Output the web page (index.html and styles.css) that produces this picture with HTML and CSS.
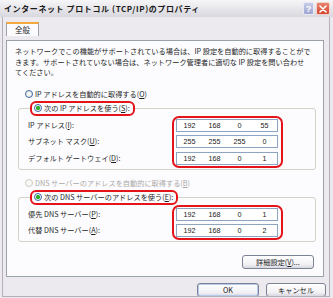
FILE: index.html
```html
<!DOCTYPE html>
<html lang="ja">
    <head>
        <meta charset="utf-8">
        <link rel="stylesheet" href="styles.css">
    </head>
    <body>
        <div class="win">
            <div class="titlebar">
                <span class="title">インターネット プロトコル (TCP/IP)のプロパティ</span>
                <span class="tbtn help">?</span>
                <span class="tbtn close">
                    <svg width="8" height="8" viewBox="0 0 8 8"><path d="M1 1 L7 7 M7 1 L1 7" stroke="#fff" stroke-width="1.6" stroke-linecap="round"/></svg>
                </span>
            </div>
            <div class="tabs">
                <div class="tab">全般</div>
            </div>
            <div class="panel">
                <p class="intro">ネットワークでこの機能がサポートされている場合は、IP 設定を自動的に取得することがで<br>きます。サポートされていない場合は、ネットワーク管理者に適切な IP 設定を問い合わせ<br>てください。</p>
                <div class="radio first"><span class="dot"></span>IP アドレスを自動的に取得する(<u>O</u>)</div>
                <fieldset class="group">
                    <legend><span class="radio on mark">
                        <span class="dot"></span>次の IP アドレスを使う(<u>S</u>):</span></legend>
                    <div class="labels">
                        <div>IP アドレス(<u>I</u>):</div>
                        <div>サブネット マスク(<u>U</u>):</div>
                        <div>デフォルト ゲートウェイ(<u>D</u>):</div>
                    </div>
                    <div class="fields">
                        <div class="ip"><span>192</span><span>168</span><span>0</span><span>55</span></div>
                        <div class="ip"><span>255</span><span>255</span><span>255</span><span>0</span></div>
                        <div class="ip"><span>192</span><span>168</span><span>0</span><span>1</span></div>
                    </div>
                </fieldset>
                <div class="radio off"><span class="dot"></span>DNS サーバーのアドレスを自動的に取得する(<u>B</u>)</div>
                <fieldset class="group">
                    <legend><span class="radio on mark">
                        <span class="dot"></span>次の DNS サーバーのアドレスを使う(<u>E</u>):</span></legend>
                    <div class="labels">
                        <div>優先 DNS サーバー(<u>P</u>):</div>
                        <div>代替 DNS サーバー(<u>A</u>):</div>
                    </div>
                    <div class="fields">
                        <div class="ip"><span>192</span><span>168</span><span>0</span><span>1</span></div>
                        <div class="ip"><span>192</span><span>168</span><span>0</span><span>2</span></div>
                    </div>
                </fieldset>
                <div class="adv">
                    <button class="btn wide">詳細設定(<u>V</u>)...</button>
                </div>
            </div>
            <div class="footer">
                <button class="btn ok">OK</button>
                <button class="btn cancel">キャンセル</button>
            </div>
        </div>
    </body>
</html>
```

FILE: styles.css
```css
*{
    box-sizing: border-box;
    margin: 0;
    padding: 0;
}
body{
    background: #ece9ef;
    font-family: "Noto Sans CJK JP", "Noto Sans", sans-serif;
    color: #1e1e1e;
}
.win{
    position: relative;
    width: 333px;
    height: 298px;
    overflow: hidden;
    background: #ece9ef;
}
/* thin outer frame of the dialog */
.win::after{
    content: "";
    position: absolute;
    left: 2px;
    right: 3px;
    top: 17px;
    bottom: 1px;
    border: 1px solid #b3b0b9;
    border-top: none;
    pointer-events: none;
}
.titlebar{
    height: 17px;
    display: flex;
    align-items: center;
    padding-left: 4px;
    padding-right: 3px;
    background: linear-gradient(#f6f6f8, #e4e3e8 60%, #d9d8df);
}
.title{
    font-size: 8px;
    font-weight: bold;
    letter-spacing: 0.6px;
    color: #1a1a1a;
    white-space: nowrap;
}
.tbtn{
    height: 13px;
    display: flex;
    align-items: center;
    justify-content: center;
    border-radius: 2px;
    color: #fff;
    font: bold 9px "Liberation Sans", sans-serif;
}
.help{
    width: 11px;
    margin-left: auto;
    margin-right: 2px;
    background: linear-gradient(#c9cdea, #9ea6d2);
    border: 1px solid #e8e9f4;
}
.close{
    width: 14px;
    background: linear-gradient(#e9836e, #d4452e);
    border: 1px solid #f3d2cb;
}
.tabs{
    height: 18px;
    padding-left: 6px;
}
.tab{
    position: relative;
    z-index: 1;
    margin-top: 5px;
    width: 33px;
    height: 14px;
    border: 1px solid #9aa1a8;
    border-top: 2px solid #f2a83a;
    border-bottom: none;
    background: #fcfcfe;
    font-size: 7.5px;
    line-height: 11px;
    text-align: center;
}
.panel{
    margin-left: 6px;
    width: 318px;
    height: 237px;
    border: 1px solid #9aa1a8;
    background: #fcfcfe;
    font-size: 7.2px;
}
.intro{
    margin: 5px 0 0 8px;
    line-height: 10.5px;
    white-space: nowrap;
}
.radio{
    display: flex;
    align-items: center;
    height: 13px;
    white-space: nowrap;
}
.radio.first{
    margin: 10px 0 0 18px;
}
.radio.off{
    margin: 7px 0 0 18px;
    color: #aaa8a6;
}
.dot{
    width: 8px;
    height: 8px;
    margin-right: 2px;
    border: 1px solid #3f67a6;
    border-radius: 50%;
    background: radial-gradient(#ffffff, #e3e2dc);
}
.radio.off .dot{
    border-color: #cfcdc4;
    background: #f7f7f5;
}
.radio.on .dot{
    background: radial-gradient(circle, #2fae2f 0 1.6px, #8ed18e 2.1px, #ffffff 2.6px, #e6e5df);
}
.mark{
    border: 2px solid #e4141a;
    border-radius: 6px;
}
.radio.mark{
    height: 15px;
    padding: 0 3px 0 2px;
}
.group{
    display: flex;
    margin: 0 7px 0 11px;
    padding: 0 0 1px 9px;
    border: 1px solid #d3d2c6;
    border-radius: 3px;
}
.group legend{
    margin-left: 2px;
    padding: 0;
}
.labels{
    width: 144px;
    padding-top: 3px;
    display: flex;
    flex-direction: column;
    gap: 3.5px;
}
.labels div{
    height: 13px;
    line-height: 13px;
    white-space: nowrap;
}
.fields{
    display: flex;
    flex-direction: column;
    gap: 3.5px;
    padding: 1px 3px 1px 2px;
    border: 2px solid #e4141a;
    border-radius: 7px;
}
.ip{
    width: 102px;
    height: 13px;
    display: grid;
    grid-template-columns: repeat(4, 1fr);
    border: 1px solid #8ea5c2;
    background: #fff;
    font: 7.2px/11px "Liberation Sans", sans-serif;
    color: #222;
    text-align: center;
}
.adv{
    display: flex;
    justify-content: flex-end;
    margin: 13px 9px 0 0;
}
.btn{
    height: 14px;
    border: 1px solid #7c8394;
    border-radius: 3px;
    background: linear-gradient(#ffffff, #f1f0f4 70%, #d9d8e0);
    font-family: "Noto Sans CJK JP", sans-serif;
    font-size: 7.2px;
    line-height: 12px;
    color: #1e1e1e;
}
.wide{
    width: 72px;
}
.footer{
    display: flex;
    justify-content: flex-end;
    gap: 7px;
    padding: 6px 7px 0 0;
}
.ok{
    width: 62px;
    box-shadow: inset 0 0 0 1px #b4cbee;
}
.cancel{
    width: 60px;
}
```
